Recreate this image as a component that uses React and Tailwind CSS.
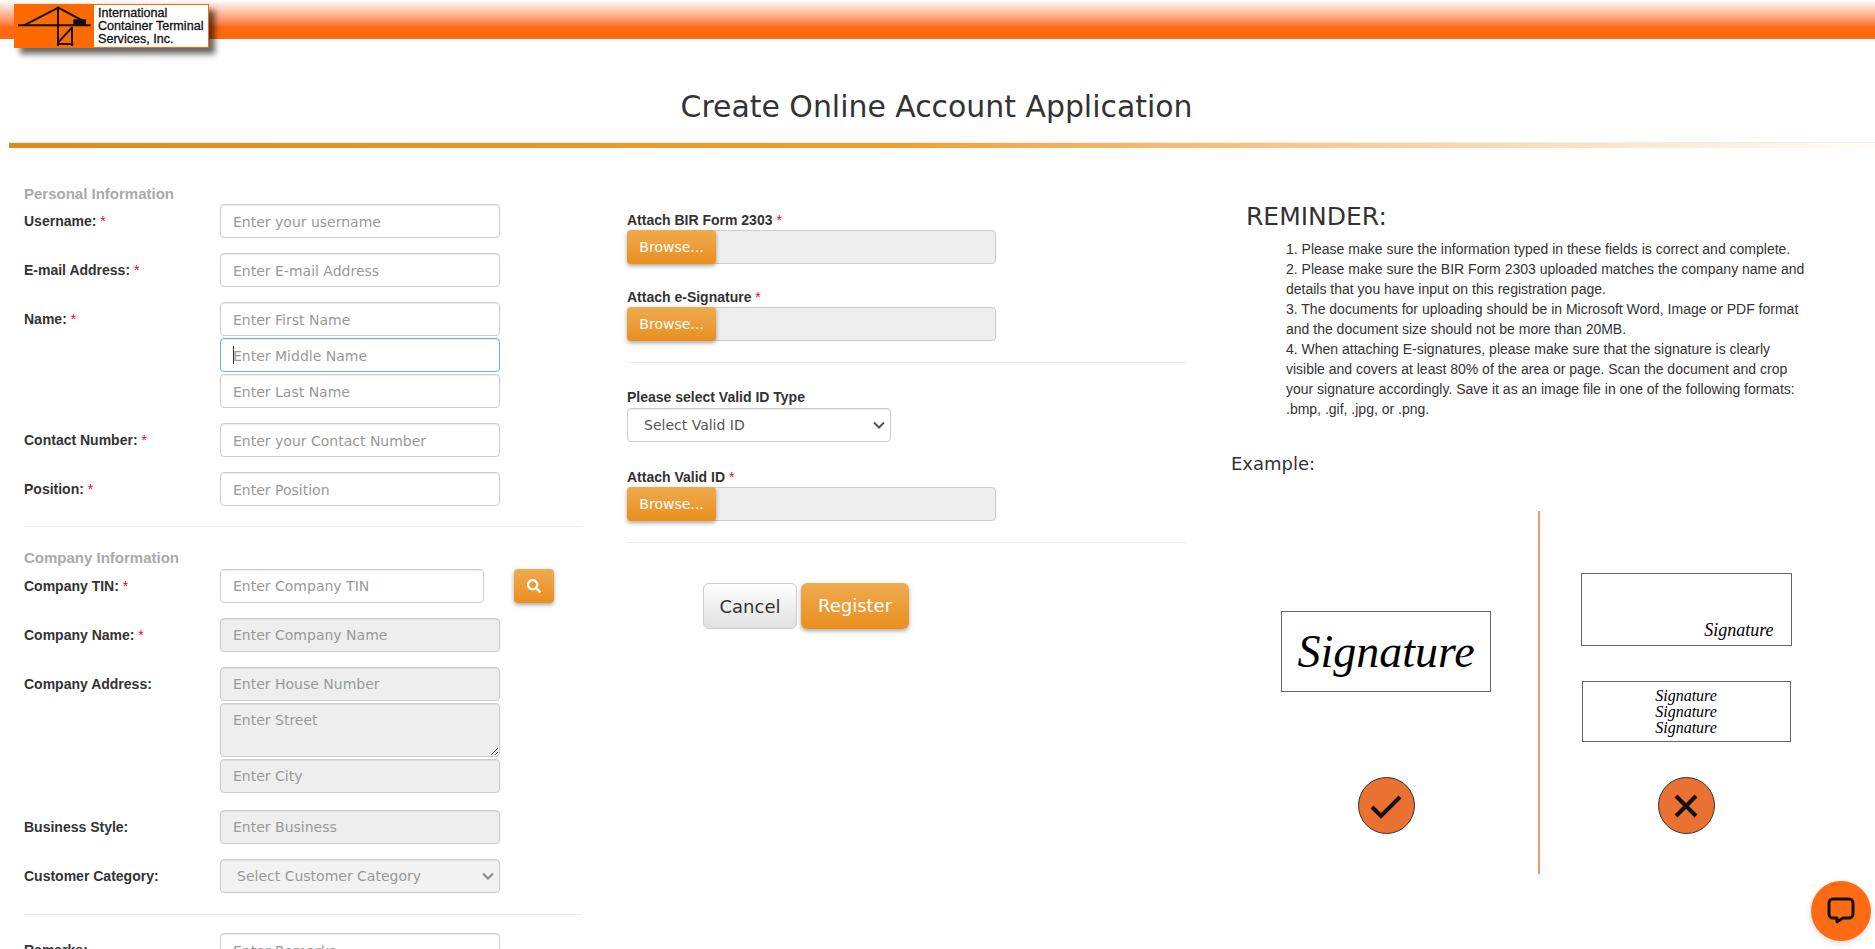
import { FaSearch } from "react-icons/fa";

const fieldBase =
  "block h-[34px] border rounded-[4px] text-[14px] placeholder-[#999] outline-none shadow-[inset_0_1px_1px_rgba(0,0,0,0.075)]";
const inputClass = `${fieldBase} w-[280px] px-3 pt-[2px] border-[#ccc] bg-white text-[#555]`;
const disabledClass = `${fieldBase} w-[280px] px-3 border-[#ccc] bg-[#eee] text-[#555]`;
const orangeButton =
  "bg-gradient-to-b from-[#efaa4e] to-[#e98f1a] text-white rounded-[4px] shadow-[0_2px_4px_rgba(0,0,0,0.35)]";

const Label = ({ text, required }) => (
  <label className="block w-[196px] shrink-0 pt-[7px] text-[14px] leading-[20px] font-bold text-[#333] font-['Liberation_Sans',sans-serif]">
    {text}
    {required && <span className="font-normal text-[#f00]"> *</span>}
  </label>
);

const SectionTitle = ({ children }) => (
  <p className="h-[20px] text-[15px] leading-[20px] font-bold text-[#aaa] font-['Liberation_Sans',sans-serif]">
    {children}
  </p>
);

const Row = ({ label, required, children, className = "mb-[15px]" }) => (
  <div className={`flex ${className}`}>
    <Label text={label} required={required} />
    <div>{children}</div>
  </div>
);

const FileField = ({ label }) => (
  <div>
    <p className="h-[20px] text-[14px] leading-[20px] font-bold text-[#333] font-['Liberation_Sans',sans-serif]">
      {label} <span className="font-normal text-[#f00]">*</span>
    </p>
    <div className="flex w-[369px] h-[34px] bg-[#eee] border border-[#ccc] rounded-[4px]">
      <button className={`w-[89px] h-[34px] -mt-px -ml-px text-[14px] ${orangeButton}`}>
        Browse...
      </button>
    </div>
  </div>
);

const SelectField = ({ className, text, disabled }) => (
  <div className="relative w-fit">
    <select
      disabled={disabled}
      className={`${fieldBase} appearance-none pl-[16px] border-[#ccc] ${className}`}
    >
      <option>{text}</option>
    </select>
    <svg
      width="12"
      height="8"
      viewBox="0 0 12 8"
      fill="none"
      stroke={disabled ? "#888" : "#555"}
      strokeWidth="2"
      className="absolute right-[6px] top-[13px]"
    >
      <path d="M1 1.5L6 6.5L11 1.5" />
    </svg>
  </div>
);

const Logo = () => (
  <div className="absolute left-[14px] top-[4px] flex w-[195px] h-[44px] bg-[#ff6a00] shadow-[6px_6px_6px_rgba(0,0,0,0.6)]">
    <svg width="80" height="44" viewBox="42 12 240 132" className="shrink-0">
      <g stroke="#111" strokeWidth="6" fill="none">
        <path d="M54 76H272" />
        <path d="M72 76L175 23L255 66" />
        <path d="M174 20V138" />
        <path d="M216 80V138" />
        <path d="M172 132H220" />
        <path d="M174 128L216 82" />
      </g>
      <rect x="220" y="58" width="38" height="18" fill="#111" />
    </svg>
    <div className="flex-1 my-px mr-px pl-[4px] pt-[2px] bg-white text-[12.6px] leading-[13px] text-[#111] font-['Liberation_Sans',sans-serif] [-webkit-text-stroke:0.3px_#111]">
      International
      <br />
      Container Terminal
      <br />
      Services, Inc.
    </div>
  </div>
);

const Circle = ({ children }) => (
  <div className="flex items-center justify-center w-[57px] h-[57px] rounded-full bg-[#e97132] border border-[#333]">
    {children}
  </div>
);

const reminders = [
  "1. Please make sure the information typed in these fields is correct and complete.",
  "2. Please make sure the BIR Form 2303 uploaded matches the company name and details that you have input on this registration page.",
  "3. The documents for uploading should be in Microsoft Word, Image or PDF format and the document size should not be more than 20MB.",
  "4. When attaching E-signatures, please make sure that the signature is clearly visible and covers at least 80% of the area or page. Scan the document and crop your signature accordingly. Save it as an image file in one of the following formats: .bmp, .gif, .jpg, or .png.",
];

const App = () => {
  return (
    <div className="relative h-[949px] overflow-hidden bg-white text-[#333] font-['DejaVu_Sans',sans-serif]">
      <div className="h-[39px] bg-gradient-to-b from-[#fff] to-[#ff6a10] to-[70%]" />
      <Logo />

      <h1 className="h-[103px] pt-[48px] pr-[2px] text-center text-[29.9px] leading-[40px] font-normal text-[#333]">
        Create Online Account Application
      </h1>
      <div className="ml-[9px] h-[6px] border-t border-[#eee] bg-gradient-to-r from-[#dd8a1a] via-[#f0a02a] via-[48%] to-[#fffdfa]" />

      <div className="flex pl-[24px] pt-[36px]">
        <div className="w-[558px] shrink-0">
          <SectionTitle>Personal Information</SectionTitle>
          <Row label="Username:" required>
            <input className={inputClass} placeholder="Enter your username" />
          </Row>
          <Row label="E-mail Address:" required>
            <input className={inputClass} placeholder="Enter E-mail Address" />
          </Row>
          <Row label="Name:" required>
            <div className="flex flex-col gap-[2px]">
              <input className={inputClass} placeholder="Enter First Name" />
              <div className="relative">
                <input
                  className={`${fieldBase} w-[280px] px-3 pt-[2px] border-[#66afe9] bg-white text-[#555] shadow-[inset_0_1px_1px_rgba(0,0,0,0.075),0_0_8px_rgba(102,175,233,0.6)]`}
                  placeholder="Enter Middle Name"
                />
                <span className="absolute left-[13px] top-[8px] w-px h-[18px] bg-[#333]" />
              </div>
              <input className={inputClass} placeholder="Enter Last Name" />
            </div>
          </Row>
          <Row label="Contact Number:" required>
            <input className={inputClass} placeholder="Enter your Contact Number" />
          </Row>
          <Row label="Position:" required className="mb-0">
            <input className={inputClass} placeholder="Enter Position" />
          </Row>

          <hr className="mt-[20px] mb-[21px] border-[#eee]" />

          <SectionTitle>Company Information</SectionTitle>
          <div className="pt-px">
            <Row label="Company TIN:" required>
              <div className="flex">
                <input
                  className={`${fieldBase} w-[264px] px-3 border-[#ccc] bg-white text-[#555]`}
                  placeholder="Enter Company TIN"
                />
                <button className={`flex items-center justify-center w-[40px] h-[34px] ml-[30px] ${orangeButton}`}>
                  <FaSearch size={14} />
                </button>
              </div>
            </Row>
            <Row label="Company Name:" required>
              <input disabled className={disabledClass} placeholder="Enter Company Name" />
            </Row>
            <Row label="Company Address:" className="mb-[17px]">
              <div className="flex flex-col gap-[2px]">
                <input disabled className={disabledClass} placeholder="Enter House Number" />
                <textarea
                  disabled
                  className={`${fieldBase} w-[280px] !h-[54px] px-3 py-[6px] border-[#ccc] bg-[#eee] text-[#555]`}
                  placeholder="Enter Street"
                />
                <input disabled className={disabledClass} placeholder="Enter City" />
              </div>
            </Row>
            <Row label="Business Style:">
              <input disabled className={disabledClass} placeholder="Enter Business" />
            </Row>
            <Row label="Customer Category:" className="mb-0">
              <SelectField
                disabled
                text="Select Customer Category"
                className="w-[280px] bg-[#f2f2f2] text-[#999]"
              />
            </Row>
          </div>

          <hr className="mt-[21px] mb-[18px] border-[#eee]" />

          <Row label="Remarks:">
            <input className={inputClass} placeholder="Enter Remarks" />
          </Row>
        </div>

        <div className="w-[559px] ml-[45px] shrink-0 pt-[26px]">
          <FileField label="Attach BIR Form 2303" />
          <div className="mt-[23px]">
            <FileField label="Attach e-Signature" />
          </div>
          <hr className="mt-[21px] mb-[24px] border-[#eee]" />
          <p className="h-[21px] text-[14px] leading-[20px] font-bold text-[#333] font-['Liberation_Sans',sans-serif]">
            Please select Valid ID Type
          </p>
          <SelectField text="Select Valid ID" className="w-[264px] bg-white text-[#555]" />
          <div className="mt-[25px]">
            <FileField label="Attach Valid ID" />
          </div>
          <hr className="mt-[21px] mb-[40px] border-[#eee]" />
          <div className="flex gap-[4px] ml-[76px]">
            <button className="w-[94px] h-[46px] border border-[#ccc] rounded-[6px] bg-gradient-to-b from-white to-[#e0e0e0] text-[18px] text-[#333]">
              Cancel
            </button>
            <button className={`w-[108px] h-[46px] pb-[2px] rounded-[6px] text-[18px] ${orangeButton}`}>
              Register
            </button>
          </div>
        </div>

        <div className="ml-[45px] flex-1">
          <h2 className="pl-[15px] mt-[17px] text-[25px] leading-[32px] font-normal text-[#333]">
            REMINDER:
          </h2>
          <div className="ml-[55px] mt-[6px] w-[525px] text-[14px] leading-[20px] text-[#333] font-['Liberation_Sans',sans-serif]">
            {reminders.map((line) => (
              <p key={line}>{line}</p>
            ))}
          </div>
          <p className="mt-[32px] text-[18px] leading-[26px] text-[#333]">Example:</p>

          <div className="flex mt-[34px]">
            <div className="flex flex-col items-center w-[309px] h-[363px] pl-[3px] pt-[100px] border-r-2 border-[#ed9b72]">
              <div className="flex items-center justify-center w-[210px] h-[81px] border border-[#666] text-[46px] italic text-black font-['Liberation_Serif',serif]">
                Signature
              </div>
              <div className="mt-[85px]">
                <Circle>
                  <svg width="34" height="30" viewBox="0 0 34 30" fill="none" stroke="#111" strokeWidth="4">
                    <path d="M3 16L12 25L31 6" />
                  </svg>
                </Circle>
              </div>
            </div>
            <div className="flex flex-col items-center w-[292px] pt-[62px]">
              <div className="flex items-end justify-end w-[211px] h-[73px] pr-[17px] pb-[1px] border border-[#666] text-[18px] italic text-black font-['Liberation_Serif',serif]">
                Signature
              </div>
              <div className="flex flex-col items-center justify-center w-[209px] h-[61px] mt-[35px] border border-[#666] text-[16px] leading-[16px] italic text-black font-['Liberation_Serif',serif]">
                <span>Signature</span>
                <span>Signature</span>
                <span>Signature</span>
              </div>
              <div className="mt-[35px]">
                <Circle>
                  <svg width="30" height="30" viewBox="0 0 30 30" fill="none" stroke="#111" strokeWidth="4">
                    <path d="M5 5L25 25M25 5L5 25" />
                  </svg>
                </Circle>
              </div>
            </div>
          </div>
        </div>
      </div>

      <div className="fixed right-[4px] bottom-[8px] flex items-center justify-center w-[60px] h-[60px] rounded-full bg-[#ff6a14] shadow-[0_2px_6px_rgba(0,0,0,0.15)]">
        <svg width="30" height="30" viewBox="0 0 30 30" fill="none" stroke="#111" strokeWidth="3" strokeLinejoin="round">
          <path d="M7 3H23A4 4 0 0 1 27 7V18A4 4 0 0 1 23 22H17L11 26V22H7A4 4 0 0 1 3 18V7A4 4 0 0 1 7 3Z" />
        </svg>
      </div>
    </div>
  );
};

export default App;
